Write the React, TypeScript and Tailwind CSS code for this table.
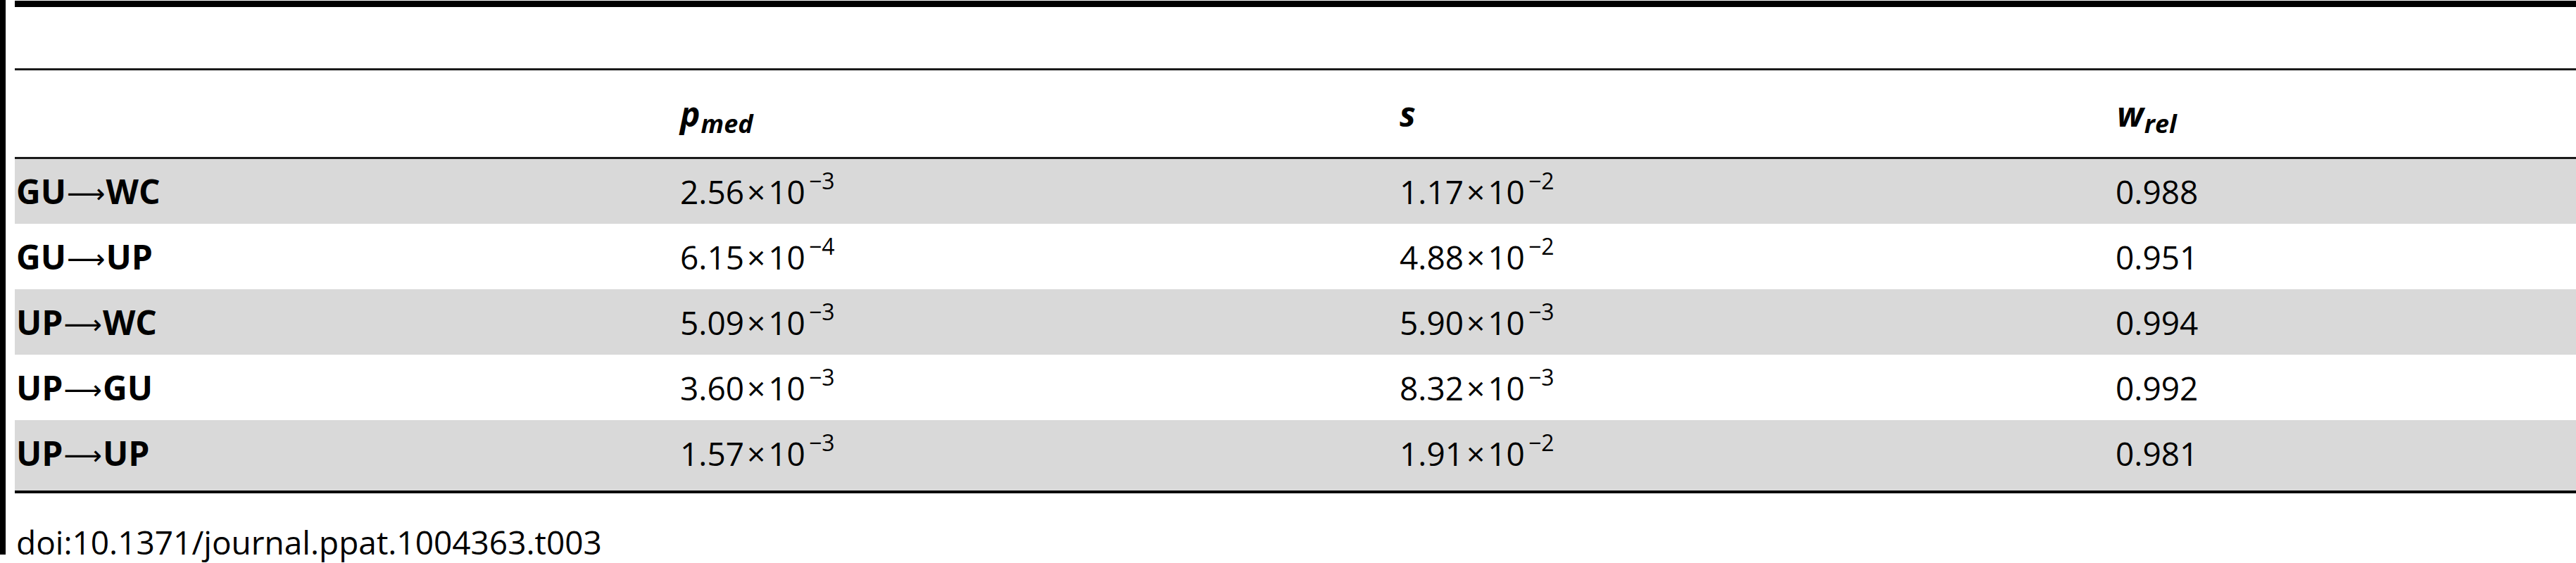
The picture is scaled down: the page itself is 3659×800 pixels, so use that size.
import React from 'react';

// Table 3 — transition parameters between compartments

type Row = {
  from: string;
  to: string;
  p: [string, string];
  s: [string, string];
  w: string;
  cls: string;
};

const rows: Row[] = [
  { from: 'GU', to: 'WC', p: ['2.56', '3'], s: ['1.17', '2'], w: '0.988', cls: 'h-[92px] bg-[#d9d9d9]' },
  { from: 'GU', to: 'UP', p: ['6.15', '4'], s: ['4.88', '2'], w: '0.951', cls: 'h-[93px] bg-white' },
  { from: 'UP', to: 'WC', p: ['5.09', '3'], s: ['5.90', '3'], w: '0.994', cls: 'h-[93px] bg-[#d9d9d9]' },
  { from: 'UP', to: 'GU', p: ['3.60', '3'], s: ['8.32', '3'], w: '0.992', cls: 'h-[93px] bg-white' },
  { from: 'UP', to: 'UP', p: ['1.57', '3'], s: ['1.91', '2'], w: '0.981', cls: 'h-[100px] pb-[7px] bg-[#d9d9d9]' },
];

function Sci({ v }: { v: [string, string] }) {
  return (
    <span className="whitespace-nowrap">
      {v[0]}
      <span className="mx-[4px]">×</span>10
      <span className="relative -top-[21px] ml-[5px] text-[32px]">−{v[1]}</span>
    </span>
  );
}

function Label({ from, to }: { from: string; to: string }) {
  return (
    <span className="whitespace-nowrap font-bold text-[48px]">
      {from}
      <span className="relative -top-[2px] mx-[1px] font-normal font-['DejaVu_Sans',sans-serif] text-[38px]">⟶</span>
      {to}
    </span>
  );
}

const grid = 'grid grid-cols-[943px_1022px_1017px_1fr] items-center';

export default function App() {
  return (
    <div className="flex h-[800px] w-[3659px] overflow-hidden bg-white font-['Open_Sans',sans-serif] text-black">
      <div className="h-[788px] w-[8px] shrink-0 bg-black" />
      <div className="ml-[13px] flex flex-1 flex-col">
        <div className="mt-[1px] h-[9px] bg-black" />
        <div className="h-[87px]" />
        <div className="h-[3px] bg-[#1a1a1a]" />

        {/* header */}
        <div className={`${grid} h-[123px] text-[48px] leading-none`}>
          <div />
          <div className="pl-[2px] font-bold italic">
            p<span className="relative top-[9px] ml-[1px] text-[36px]">med</span>
          </div>
          <div className="pl-[2px] font-bold italic">s</div>
          <div className="pl-[4px] font-bold italic">
            w<span className="relative top-[9px] ml-[1px] text-[36px]">rel</span>
          </div>
        </div>
        <div className="h-[3px] bg-[#1a1a1a]" />

        {rows.map((r) => (
          <div key={r.from + r.to} className={`${grid} ${r.cls} text-[46px] leading-none`}>
            <div className="pl-[2px]">
              <Label from={r.from} to={r.to} />
            </div>
            <div className="pl-[2px]">
              <Sci v={r.p} />
            </div>
            <div className="pl-[2px]">
              <Sci v={r.s} />
            </div>
            <div className="pl-[2px]">{r.w}</div>
          </div>
        ))}
        <div className="h-[4px] bg-black" />

        <p className="mt-[46px] pl-[2px] text-[46px] leading-[46px]">doi:10.1371/journal.ppat.1004363.t003</p>
      </div>
    </div>
  );
}
